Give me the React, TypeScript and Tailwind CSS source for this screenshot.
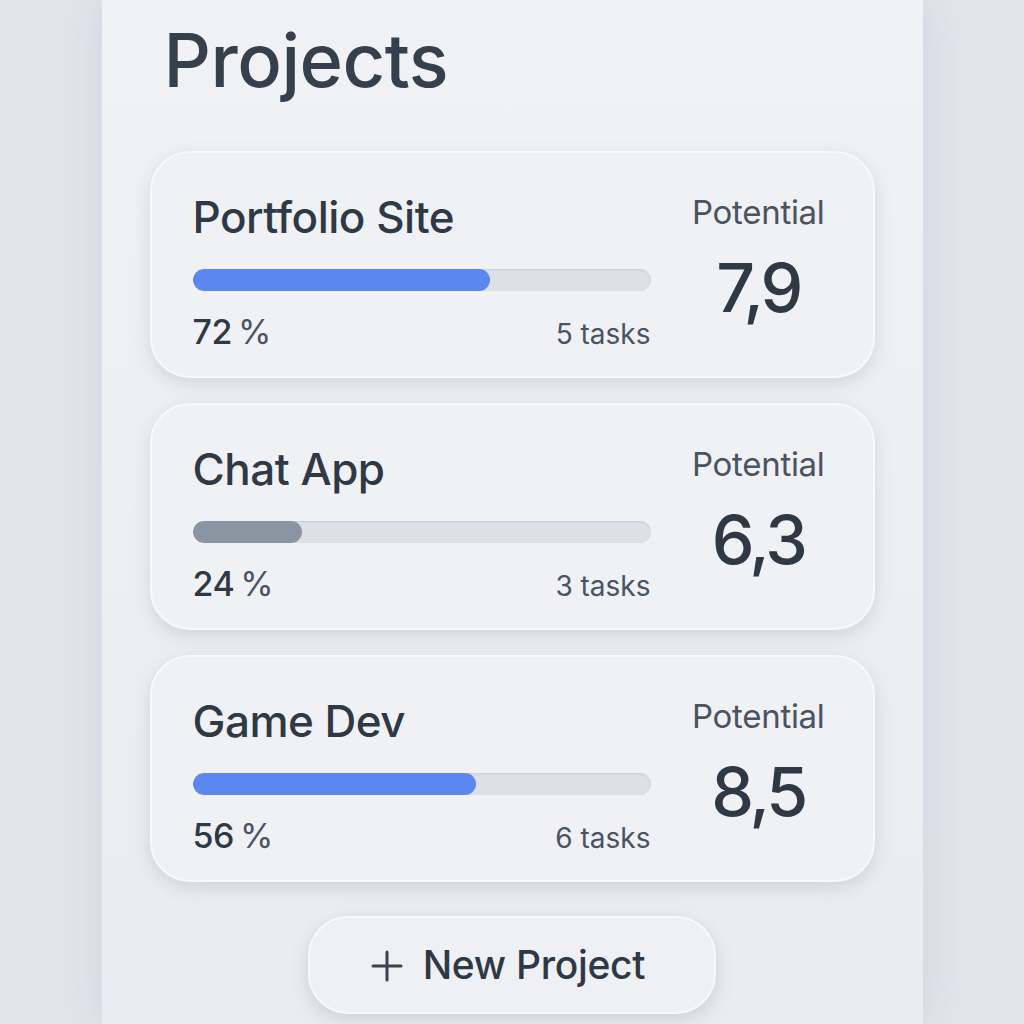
import React from "react";

const projects = [
  { name: "Portfolio Site", pct: "72", fill: 65, color: "bg-[#5b87f0]", tasks: "5 tasks", potential: "7,9" },
  { name: "Chat App", pct: "24", fill: 24, color: "bg-[#8b94a3]", tasks: "3 tasks", potential: "6,3" },
  { name: "Game Dev", pct: "56", fill: 62, color: "bg-[#5b87f0]", tasks: "6 tasks", potential: "8,5" },
];

export default function App() {
  return (
    <div
      className="w-[1024px] h-[1024px] overflow-hidden bg-[#e2e5eb] flex justify-center"
      style={{ fontFamily: "Inter, 'Noto Sans', sans-serif" }}
    >
      <div className="w-[821px] h-full bg-gradient-to-b from-[#f1f2f5] to-[#e9ecf0] shadow-[0_0_40px_rgba(150,160,180,0.25)] flex flex-col px-[48px]">
        <h1 className="mt-[10px] ml-[14px] text-[74px] leading-[100px] font-medium tracking-[-0.5px] text-[#363f4c]">
          Projects
        </h1>
        <div className="mt-[41px] flex flex-col gap-[25px]">
          {projects.map((p) => (
            <div
              key={p.name}
              className="h-[227px] rounded-[40px] bg-[#f0f1f4] border-2 border-[#f8f9fb] shadow-[0_6px_18px_rgba(140,150,170,0.28)] flex pl-[41px] pr-[48px] pt-[36px]"
            >
              <div className="w-[458px] flex flex-col">
                <div className="text-[44px] leading-[56px] font-medium text-[#2f3845] tracking-[-0.5px]">{p.name}</div>
                <div className="mt-[24px] h-[22px] rounded-full bg-[#dde0e7] shadow-[inset_0_1px_2px_rgba(120,130,150,0.2)] overflow-hidden">
                  <div className={`h-full rounded-full ${p.color}`} style={{ width: `${p.fill}%` }} />
                </div>
                <div className="mt-[20px] flex justify-between items-baseline">
                  <span className="text-[34px] leading-[42px] font-medium text-[#2f3845] tracking-[-0.5px]">
                    {p.pct}
                    <span className="ml-[6px] font-normal text-[#4a5361]">%</span>
                  </span>
                  <span className="text-[28px] leading-[42px] text-[#4a5361]">{p.tasks}</span>
                </div>
              </div>
              <div className="flex-1 flex flex-col items-end">
                <div className="flex flex-col items-center">
                  <div className="text-[33px] leading-[46px] text-[#4a5361] tracking-[-0.3px]">Potential</div>
                  <div className="mt-[10px] text-[68px] leading-[84px] font-medium text-[#2f3845] tracking-[-3px]">{p.potential}</div>
                </div>
              </div>
            </div>
          ))}
        </div>
        <div className="mt-[34px] flex justify-center">
          <div className="w-[408px] h-[98px] rounded-[40px] bg-[#eef0f3] border-2 border-[#f8f9fb] shadow-[0_6px_18px_rgba(140,150,170,0.3)] flex items-center justify-center gap-[20px] pr-[8px]">
            <svg width="32" height="32" viewBox="0 0 32 32" className="text-[#3a4350] mt-[2px]">
              <path d="M16 2v28M2 16h28" stroke="currentColor" strokeWidth="3" strokeLinecap="round" />
            </svg>
            <span className="text-[39px] font-medium text-[#2f3845] tracking-[-0.3px]">New Project</span>
          </div>
        </div>
      </div>
    </div>
  );
}
